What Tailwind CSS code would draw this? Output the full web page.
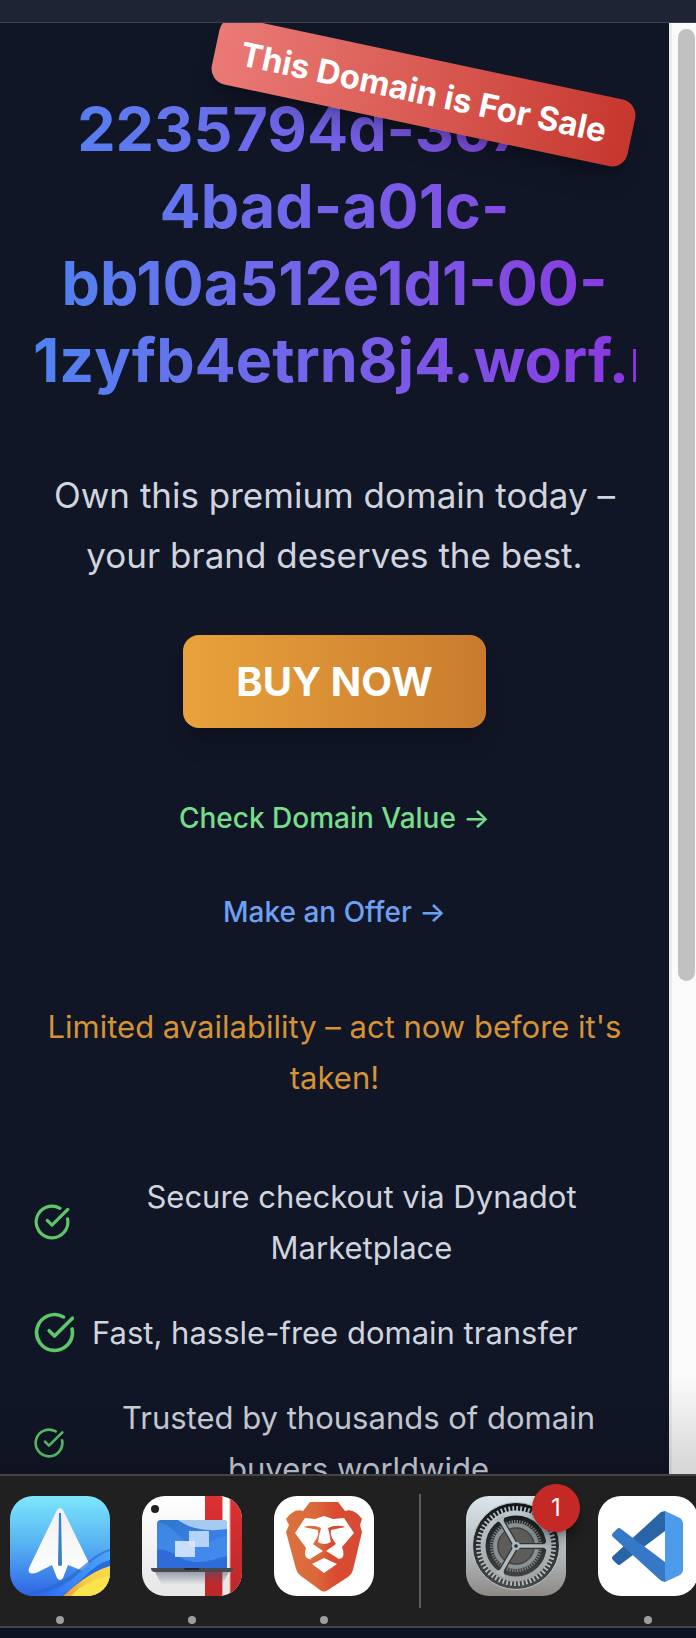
<!DOCTYPE html>
<html lang="en">
<head>
<meta charset="utf-8">
<meta name="viewport" content="width=device-width, initial-scale=1">
<title>This Domain is For Sale</title>
<script src="https://cdn.jsdelivr.net/npm/@tailwindcss/browser@4"></script>
</head>
<body class="flex h-screen flex-col overflow-hidden bg-[#0c1222] font-['Inter',sans-serif]">
  <header class="h-[23px] shrink-0 border-b border-[#3c4252] bg-[#1e2433]"></header>

  <div class="relative flex min-h-0 flex-1 overflow-hidden bg-[#111627]">
    <main class="relative min-w-0 flex-1 overflow-hidden px-[33px] pt-[68px] text-center">
      <h1 class="bg-linear-to-r from-[#4e83f1] to-[#8a35e0] bg-clip-text text-[61px] leading-[77px] font-bold whitespace-nowrap text-transparent">
        <span class="block">2235794d-3c74-</span>
        <span class="block">4bad-a01c-</span>
        <span class="block">bb10a512e1d1-00-</span>
        <span class="block">1zyfb4etrn8j4.worf.replit.dev</span>
      </h1>
      <div class="absolute top-[35px] right-[33px] rotate-12 rounded-2xl bg-linear-to-r from-[#ea7a76] to-[#c6362d] px-[26px] py-4 text-[33px] leading-9 font-bold whitespace-nowrap text-white shadow-xl shadow-black/20">This Domain is For Sale</div>

      <p class="mt-[66px] text-[35px] leading-[60px] text-[#cfd4de]">Own this premium domain today –<br>your brand deserves the best.</p>

      <button type="button" class="mt-[50px] h-[93px] rounded-2xl bg-linear-to-r from-[#e9a23b] to-[#c97b2d] px-[53px] text-[40px] leading-[60px] font-bold text-white shadow-xl shadow-black/15">BUY NOW</button>

      <nav class="mt-[67px] flex flex-col items-center gap-12 text-[28px] leading-[46px] font-medium">
        <a href="#value" class="text-[#77dd8b]">Check Domain Value →</a>
        <a href="#offer" class="text-[#6ea0f3]">Make an Offer →</a>
      </nav>

      <p class="mt-[66px] text-[31px] leading-[51px] text-[#d59335]">Limited availability – act now before it's taken!</p>

      <ul class="mt-[68px] flex flex-col gap-[34px] text-[31px] leading-[51px] text-[#cfd4de]">
        <li class="flex items-center gap-4">
          <svg class="size-[38px] shrink-0 text-[#5cc869]" viewBox="0 0 24 24" fill="none" stroke="currentColor" stroke-width="2" stroke-linecap="round" stroke-linejoin="round"><path d="M21.8 10A10 10 0 1 1 17 3.34"/><path d="m9 11 3 3L22 4"/></svg>
          <span class="flex-1">Secure checkout via Dynadot<br>Marketplace</span>
        </li>
        <li class="flex items-center gap-4">
          <svg class="size-[43px] shrink-0 text-[#5cc869]" viewBox="0 0 24 24" fill="none" stroke="currentColor" stroke-width="2" stroke-linecap="round" stroke-linejoin="round"><path d="M21.8 10A10 10 0 1 1 17 3.34"/><path d="m9 11 3 3L22 4"/></svg>
          <span class="whitespace-nowrap">Fast, hassle-free domain transfer</span>
        </li>
        <li class="flex items-center gap-4">
          <svg class="size-8 shrink-0 text-[#5cc869]" viewBox="0 0 24 24" fill="none" stroke="currentColor" stroke-width="2" stroke-linecap="round" stroke-linejoin="round"><path d="M21.8 10A10 10 0 1 1 17 3.34"/><path d="m9 11 3 3L22 4"/></svg>
          <span class="flex-1">Trusted by thousands of domain<br>buyers worldwide</span>
        </li>
      </ul>
    </main>
    <div class="w-[27px] shrink-0 border-l-[3px] border-[#ececec] bg-[#fafafa] pt-1.5 pr-px pl-1.5">
      <div class="h-[952px] rounded-full bg-[#c1c1c1]"></div>
    </div>
    <div class="pointer-events-none absolute inset-x-0 bottom-0 h-24 bg-linear-to-b from-black/0 to-black/15"></div>
  </div>

  <footer class="relative mb-[10px] flex h-[154px] shrink-0 gap-8 overflow-hidden border-y-2 border-[#444444] bg-[#202020] pt-5 pl-[10px]">
    <button type="button" aria-label="Spark" class="flex w-[100px] shrink-0 flex-col items-center gap-5">
      <svg class="size-[100px] shrink-0" viewBox="0 0 100 100">
        <defs>
          <linearGradient id="sky" x2="0" y2="1"><stop stop-color="#7de7fc"/><stop offset=".5" stop-color="#55b0f1"/><stop offset="1" stop-color="#2d62e5"/></linearGradient>
          <linearGradient id="plane" x2="0" y2="1"><stop stop-color="#f0f0f0"/><stop offset="1" stop-color="#fff"/></linearGradient>
          <linearGradient id="wave"><stop stop-color="#2559f5"/><stop offset="1" stop-color="#4aa7f8"/></linearGradient>
          <linearGradient id="sun"><stop stop-color="#ee9838"/><stop offset=".5" stop-color="#f8cd45"/><stop offset="1" stop-color="#f9d84b"/></linearGradient>
          <clipPath id="tile"><rect width="100" height="100" rx="23"/></clipPath>
        </defs>
        <g clip-path="url(#tile)">
          <rect width="100" height="100" fill="url(#sky)"/>
          <path d="M47 14Q50 10 53 14L79 67Q78 75 73 75L58 69L53 82Q50 86 47 82L42 69L26 77Q17 79 19 72Z" fill="url(#plane)"/>
          <path d="M49 17H51L52 69Q50 71 48 69Z" fill="#397fce"/>
          <path d="M100 53C82 58 74 72 56 82C38 93 21 98 0 100H100Z" fill="#2669ca" opacity=".65"/>
          <path d="M100 55C80 61 73 78 53 89C38 97 28 98 14 100H100Z" fill="url(#wave)"/>
          <path d="M100 64C82 68 69 89 51 100H100Z" fill="#286bdb"/>
          <path d="M100 70C80 76 67 88 53 100H100Z" fill="url(#sun)"/>
          <path d="M100 80C84 83 70 90 61 100H100Z" fill="#f9e54b"/>
        </g>
      </svg>
      <span class="size-2 shrink-0 rounded-full bg-[#9d9d9d]"></span>
    </button>
    <button type="button" aria-label="Remote desktop" class="flex w-[100px] shrink-0 flex-col items-center gap-5">
      <svg class="size-[100px] shrink-0" viewBox="0 0 100 100">
        <defs>
          <linearGradient id="paper" x2="0" y2="1"><stop stop-color="#fff"/><stop offset="1" stop-color="#e6e6e6"/></linearGradient>
          <linearGradient id="red" x2="0" y2="1"><stop stop-color="#dc3131"/><stop offset="1" stop-color="#bd272a"/></linearGradient>
          <linearGradient id="screen" x2="1" y2="1"><stop stop-color="#2e76ca"/><stop offset=".5" stop-color="#397de5"/><stop offset="1" stop-color="#397eea"/></linearGradient>
          <linearGradient id="shade" x2="0" y2="1"><stop stop-color="#44506e" stop-opacity=".5"/><stop offset="1" stop-color="#44506e" stop-opacity="0"/></linearGradient>
        </defs>
        <g clip-path="url(#tile)">
          <rect width="100" height="100" fill="url(#paper)"/>
          <path d="M63 0h17v100H63zM88 0h12v100H88z" fill="url(#red)"/>
          <path d="M80.500 0v100M88 0v100" stroke="#f39a9a"/>
          <path d="M13 76H87L80 89H20Z" fill="url(#shade)"/>
          <circle cx="13" cy="13" r="4" fill="#1f1f1f"/>
          <path d="M15 73V28Q15 24 19 24H81Q85 24 85 28V73Z" fill="url(#screen)"/>
          <path d="M36 24C48 33 66 36 85 33V28Q85 24 81 24Z" fill="#a4cbee"/>
          <path d="M15 26C31 27 38 46 51 49C66 52 73 40 85 40V62C62 69 49 67 38 61C29 56 22 53 15 54Z" fill="#4591ec" opacity=".65"/>
          <path d="M15 54C28 50 37 67 56 66C68 66 77 61 85 60V73H15Z" fill="#2861d0" opacity=".6"/>
          <rect x="47" y="35" width="20" height="16" fill="#c2ddfb" opacity=".9"/>
          <rect x="33" y="45" width="20" height="16" fill="#d9e7fb" opacity=".9"/>
          <path d="M9 72H91V74Q90 76 87 76H13Q9 76 9 72Z" fill="#464a4f"/><path d="M42 72h15v2H43z" fill="#24282c"/>
        </g>
      </svg>
      <span class="size-2 shrink-0 rounded-full bg-[#9d9d9d]"></span>
    </button>
    <button type="button" aria-label="Brave" class="flex w-[100px] shrink-0 flex-col items-center gap-5">
      <svg class="size-[100px] shrink-0" viewBox="0 0 100 100">
        <defs><linearGradient id="lion"><stop stop-color="#dc713e"/><stop offset=".38" stop-color="#db693a"/><stop offset=".64" stop-color="#d94c32"/><stop offset="1" stop-color="#d64a34"/></linearGradient></defs>
        <rect width="100" height="100" rx="23" fill="#fff"/>
        <path d="M36 6H64L71 15Q80 12 88 23L86 29L88 36L79 74Q78 78 74 81L54 94Q50 97 46 94L27 80Q23 77 22 73L12 36L15 29L12 23Q20 12 29 15Z" fill="url(#lion)"/>
        <path d="M31 22L41 23L50 20L59 23L70 22L80 37L68 51Q72 62 65 63Q60 66 51 55L61 48L57 42Q55 36 56 33L71 31Q63 29 55 32L57 47L50 50L43 47L46 32Q38 29 30 31L45 33Q46 37 44 42L40 48L50 55Q42 66 35 63Q29 61 32 52L21 37Z" fill="#fff"/>
        <path d="M30 31Q38 28 47 32Q45 39 44 46Q50 50 57 46Q56 39 54 32Q62 28 71 31L57 34Q56 38 58 42L62 48L52 55L65 63L62 65L50 58L39 65L36 63L49 55L39 48L43 42Q45 38 44 34Z" fill="url(#lion)"/>
        <path d="M38 68L50 62L63 68L50 77Z" fill="#fff"/>
      </svg>
      <span class="size-2 shrink-0 rounded-full bg-[#9d9d9d]"></span>
    </button>
    <div class="mx-[13px] -mt-0.5 h-[114px] w-0.5 shrink-0 bg-[#5d5d5d]"></div>
    <button type="button" aria-label="System settings, 1 notification" class="relative h-[100px] w-[100px] shrink-0">
      <svg class="size-[100px] shrink-0" viewBox="0 0 100 100">
        <defs>
          <linearGradient id="case" x2="0" y2="1"><stop stop-color="#dbe7ee"/><stop offset=".65" stop-color="#acb1b4"/><stop offset="1" stop-color="#8d8985"/></linearGradient>
          <linearGradient id="metal" x2="0" y2="1"><stop stop-color="#bdc9ce"/><stop offset="1" stop-color="#a1a3a4"/></linearGradient>
          <linearGradient id="well" x2="0" y2="1"><stop stop-color="#101517"/><stop offset="1" stop-color="#4a4b4a"/></linearGradient>
        </defs>
        <rect width="100" height="100" rx="23" fill="url(#case)"/>
        <circle cx="50" cy="50" r="43.500" fill="url(#well)" stroke="#bfc5c8"/>
        <circle cx="50" cy="50" r="37.500" fill="none" stroke="#b4bec2" stroke-width="5" stroke-dasharray="1.800 2.127"/>
        <circle cx="50" cy="50" r="33" fill="none" stroke="url(#metal)" stroke-width="5"/>
        <circle cx="50" cy="50" r="24.500" fill="none" stroke="#81898b" stroke-width="3" stroke-dasharray="1.200 1.366"/>
        <circle cx="50" cy="50" r="21" fill="#666" stroke="#899193" stroke-width="4"/>
        <circle cx="50" cy="50" r="18" fill="#5d5c5a" stroke="#383b3b"/>
        <path d="M50 50H82M50 50L34 22.500M50 50L34 77.500" stroke="#303536" stroke-width="6"/>
        <path d="M50 50H82M50 50L34 22.500M50 50L34 77.500" stroke="#b0b9bd" stroke-width="3.500"/>
        <path d="M76 50L84 43V57ZM37 27.500L28 24L39 18ZM37 72.500L28 76L39 82Z" fill="#adb6ba"/>
        <circle cx="50" cy="50" r="4" fill="#b1babd"/><circle cx="50" cy="50" r="1.800" fill="#252a2c"/>
      </svg>
      <span class="absolute -top-3 -right-3.5 flex size-12 items-center justify-center rounded-full bg-[#c42926] text-2xl text-white shadow-lg shadow-black/40">1</span>
    </button>
    <button type="button" aria-label="Visual Studio Code" class="flex w-[100px] shrink-0 flex-col items-center gap-5">
      <svg class="size-[100px] shrink-0" viewBox="0 0 100 100">
        <rect width="100" height="100" rx="23" fill="#fff"/>
        <path d="M63 16L67 15V35L23 68Q21 70 19 68L15 64Q13 62 15 60Z" fill="#2964a7"/>
        <path d="M15 37L19 33Q21 31 23 33L67 66V86Q64 86 61 83L15 41Q13 39 15 37Z" fill="#3478c6"/>
        <path d="M67 15L82 22Q85 24 85 27V74Q85 77 82 79L67 86Z" fill="#4c9ae9"/>
      </svg>
      <span class="size-2 shrink-0 rounded-full bg-[#9d9d9d]"></span>
    </button>
  </footer>
</body>
</html>
